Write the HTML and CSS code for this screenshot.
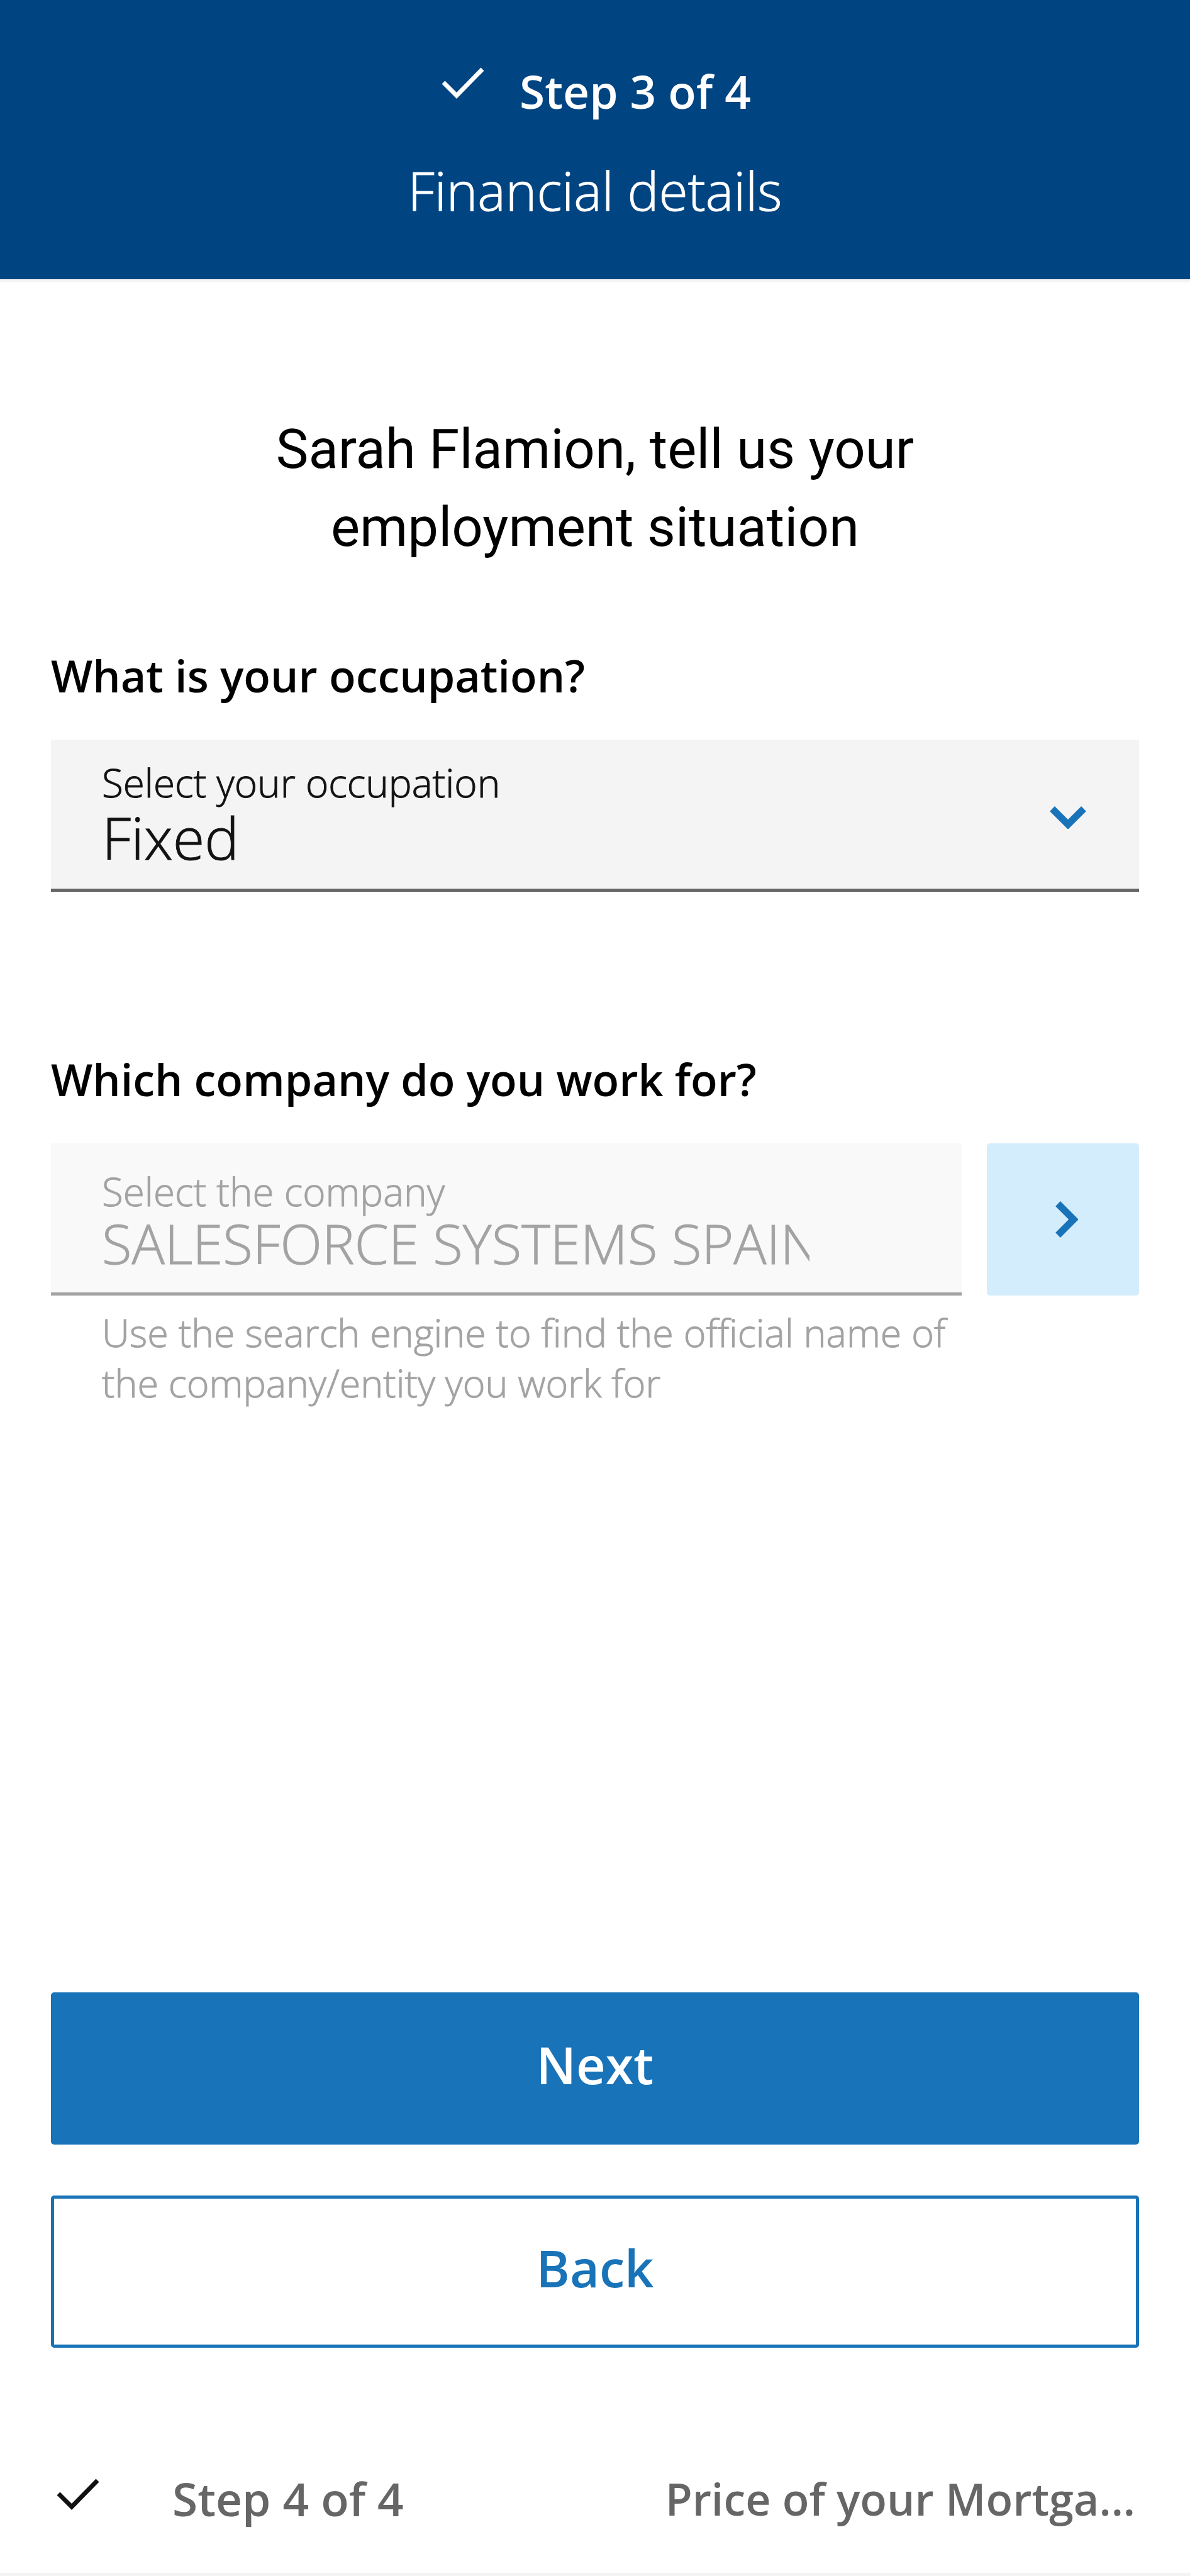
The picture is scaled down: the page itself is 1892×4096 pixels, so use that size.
FILE: index.html
```html
<!DOCTYPE html>
<html lang="en">
<head>
  <meta charset="utf-8">
  <meta name="viewport" content="width=device-width, initial-scale=1">
  <title>Financial details</title>
  <link rel="stylesheet" href="styles.css">
</head>
<body>
  <header class="step-header">
    <div class="step-header-row">
      <svg class="check" viewBox="0 0 68 50" aria-hidden="true"><path d="M3 24 L24 45 L65 3"/></svg>
      <span class="step-name">Step 3 of 4</span>
    </div>
    <p class="step-title">Financial details</p>
  </header>

  <main class="content">
    <h1 class="heading">Sarah Flamion, tell us your<br>employment situation</h1>
    <form class="form">
      <section class="question">
        <h2 class="question-title">What is your occupation?</h2>
        <div class="field">
          <label class="field-label" for="occupation">Select your occupation</label>
          <select class="field-select" id="occupation">
            <option>Fixed</option>
          </select>
          <svg class="field-arrow" viewBox="0 0 58 36" aria-hidden="true"><path d="M4 4 L29 29 L54 4"/></svg>
        </div>
      </section>

      <section class="question">
        <h2 class="question-title">Which company do you work for?</h2>
        <div class="company-row">
          <div class="field field-disabled">
            <label class="field-label" for="company">Select the company</label>
            <input class="field-input" id="company" type="text" value="SALESFORCE SYSTEMS SPAIN" disabled>
          </div>
          <button class="search-button" type="button" aria-label="Search company">
            <svg class="search-arrow" viewBox="0 0 36 58" aria-hidden="true"><path d="M4 4 L29 29 L4 54"/></svg>
          </button>
        </div>
        <p class="helper">Use the search engine to find the official name of<br>the company/entity you work for</p>
      </section>

      <div class="actions">
        <button class="button button-primary" type="submit">Next</button>
        <button class="button button-secondary" type="button">Back</button>
      </div>
    </form>
  </main>

  <footer class="next-step">
    <svg class="check" viewBox="0 0 68 50" aria-hidden="true"><path d="M3 24 L24 45 L65 3"/></svg>
    <span class="step-name">Step 4 of 4</span>
    <span class="next-step-title">Price of your Mortga...</span>
  </footer>
</body>
</html>
```
FILE: styles.css
```css
* {
  box-sizing: border-box;
  margin: 0;
}

body {
  display: flex;
  flex-direction: column;
  min-height: 100vh;
  background: #fff;
  color: #121212;
  font-family: "Open Sans", "Noto Sans", sans-serif;
}

button,
input,
select {
  font-family: inherit;
}

.check {
  flex: none;
  width: 68px;
  height: 50px;
  fill: none;
  stroke: currentColor;
  stroke-width: 7;
}

.step-name {
  font-size: 73px;
  font-weight: 600;
  line-height: 100px;
}

.step-header {
  display: flex;
  flex-direction: column;
  align-items: center;
  gap: 52px;
  padding: 95px 81px 85px;
  border-bottom: 5px solid #f4f4f4;
  background: #004481;
  background-clip: padding-box;
  color: #fff;
}

.step-header-row {
  display: flex;
  gap: 56px;
  padding-left: 4px;
}

.step-header .check {
  margin-top: 12px;
}

.step-title {
  font-size: 84px;
  font-weight: 300;
  line-height: 112px;
}

/* The light weight is too thin for body copy, so it gets a hairline stroke. */
.step-title,
.field-label,
.field-select,
.field-input,
.helper {
  -webkit-text-stroke: 1px currentColor;
}

.content {
  display: flex;
  flex: 1;
  flex-direction: column;
  padding: 203px 81px 0;
}

.heading {
  color: #000;
  font-family: Roboto, sans-serif;
  font-size: 87px;
  font-weight: 400;
  line-height: 124px;
  text-align: center;
}

.form {
  display: flex;
  flex: 1;
  flex-direction: column;
  gap: 248px;
  padding-top: 124px;
}

.question-title {
  margin-bottom: 52px;
  color: #000;
  font-size: 70px;
  font-weight: 600;
  line-height: 100px;
}

.field {
  position: relative;
  display: flex;
  flex: 1;
  flex-direction: column;
  height: 242px;
  padding: 30px 242px 0 81px;
  border-bottom: 5px solid #666;
  background: #f4f4f4;
}

.field-label {
  font-size: 62px;
  font-weight: 300;
  line-height: 76px;
}

.field-select,
.field-input {
  width: 100%;
  padding: 0;
  border: 0;
  background: none;
  color: inherit;
  font-weight: 300;
  appearance: none;
}

.field-select {
  height: 100px;
  font-size: 92px;
  line-height: 100px;
}

.field-input {
  height: 88px;
  font-size: 87px;
  line-height: 88px;
}

.field-arrow {
  position: absolute;
  top: 106px;
  right: 84px;
  width: 58px;
  height: 36px;
  fill: none;
  stroke: #1973b8;
  stroke-width: 11;
  pointer-events: none;
}

.field-disabled {
  padding-top: 38px;
  border-color: #a3a3a3;
  background: #f9f9f9;
  color: #a3a3a3;
}

.company-row {
  display: flex;
  gap: 40px;
}

.search-button {
  display: flex;
  align-items: center;
  justify-content: center;
  width: 242px;
  height: 242px;
  padding: 0 0 0 12px;
  border: 0;
  border-radius: 5px;
  background: #d4edfc;
}

.search-arrow {
  width: 36px;
  height: 58px;
  fill: none;
  stroke: #1973b8;
  stroke-width: 11;
}

.helper {
  padding: 19px 0 0 81px;
  color: #a3a3a3;
  font-size: 61px;
  font-weight: 300;
  line-height: 80px;
}

.actions {
  display: flex;
  flex-direction: column;
  gap: 81px;
  margin-top: auto;
}

.button {
  height: 242px;
  padding: 0 0 12px;
  border: 5px solid #1973b8;
  border-radius: 5px;
  font-size: 81px;
  font-weight: 600;
  line-height: 112px;
}

.button-primary {
  background: #1973b8;
  color: #fff;
}

.button-secondary {
  background: #fff;
  color: #1973b8;
}

.next-step {
  display: flex;
  padding: 190px 87px 68px 90px;
  border-bottom: 5px solid #f4f4f4;
}

.next-step .check {
  margin-top: 18px;
}

.next-step .step-name,
.next-step-title {
  color: #666;
}

.next-step .step-name {
  margin-left: 116px;
}

.next-step-title {
  margin-left: auto;
  font-size: 70px;
  font-weight: 600;
  line-height: 100px;
}
```
